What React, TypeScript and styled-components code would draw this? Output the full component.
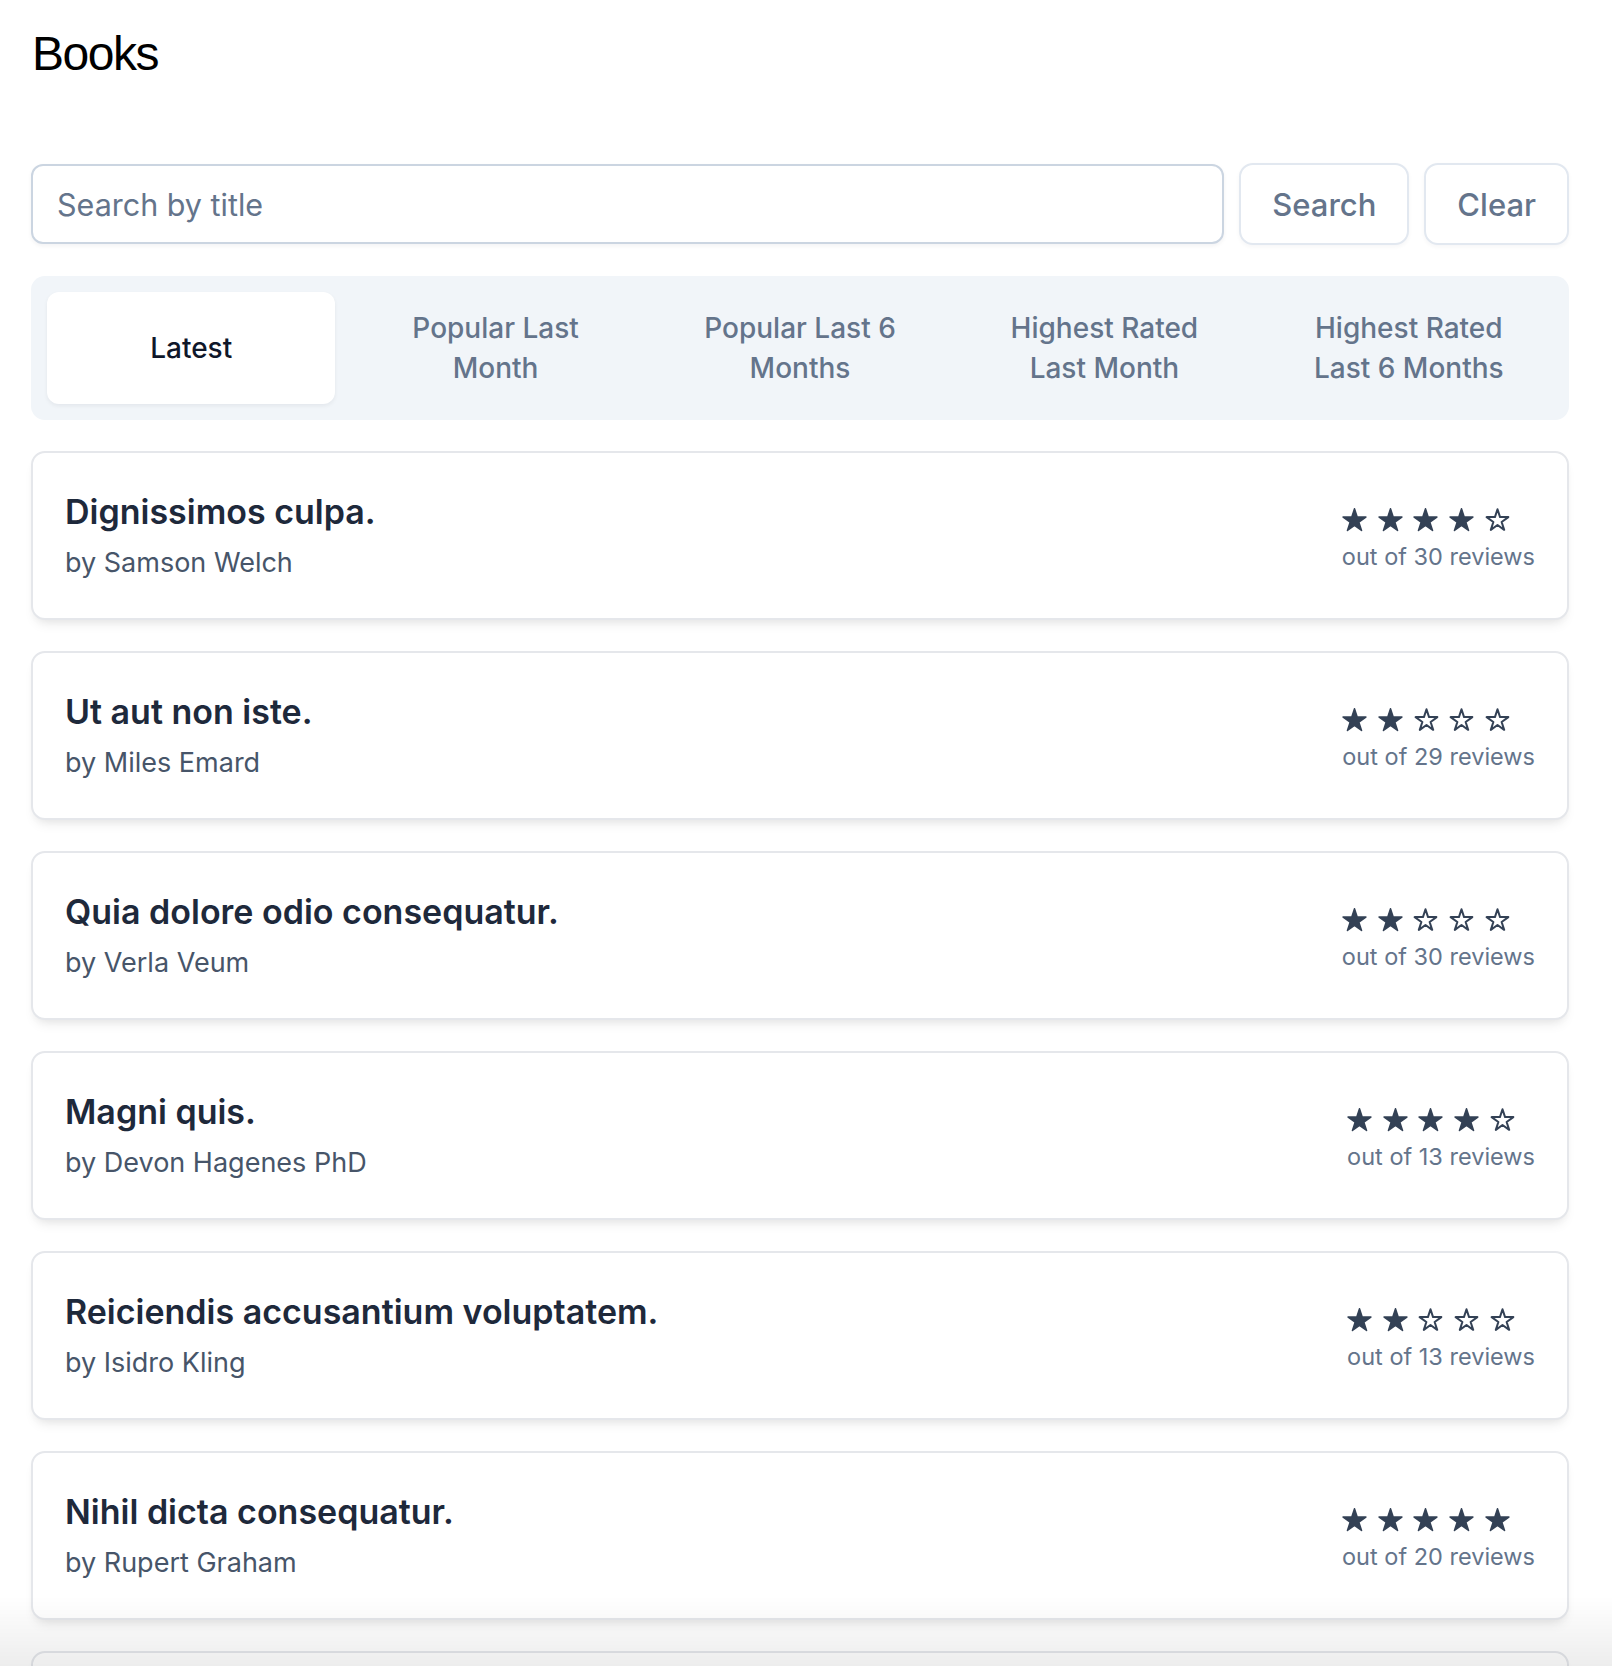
import styled, { createGlobalStyle } from 'styled-components'

type Book = {
  title: string
  author: string
  rating: number
  reviews: number
}

const books: Book[] = [
  { title: 'Dignissimos culpa.', author: 'Samson Welch', rating: 4, reviews: 30 },
  { title: 'Ut aut non iste.', author: 'Miles Emard', rating: 2, reviews: 29 },
  { title: 'Quia dolore odio consequatur.', author: 'Verla Veum', rating: 2, reviews: 30 },
  { title: 'Magni quis.', author: 'Devon Hagenes PhD', rating: 4, reviews: 13 },
  { title: 'Reiciendis accusantium voluptatem.', author: 'Isidro Kling', rating: 2, reviews: 13 },
  { title: 'Nihil dicta consequatur.', author: 'Rupert Graham', rating: 5, reviews: 20 },
  { title: 'Voluptas et rerum.', author: 'Ada Kuhn', rating: 3, reviews: 18 },
]

const tabs = [
  'Latest',
  'Popular Last Month',
  'Popular Last 6 Months',
  'Highest Rated Last Month',
  'Highest Rated Last 6 Months',
]

// star outline as polygon points, R = outer radius
const starPoints = (R: number, cx: number, cy: number) => {
  const r = R * 0.382
  const pts: string[] = []
  for (let i = 0; i < 10; i++) {
    const a = ((-90 + i * 36) * Math.PI) / 180
    const rad = i % 2 === 0 ? R : r
    pts.push(`${(cx + rad * Math.cos(a)).toFixed(2)},${(cy + rad * Math.sin(a)).toFixed(2)}`)
  }
  return pts.join(' ')
}

function Star({ filled }: { filled: boolean }) {
  return (
    <svg width="25" height="24" viewBox="0 0 25 24">
      {filled ? (
        <polygon
          points={starPoints(12, 12.5, 12.75)}
          fill="#334155"
          stroke="#334155"
          strokeWidth="1.5"
          strokeLinejoin="round"
        />
      ) : (
        <polygon
          points={starPoints(11.4, 12.5, 12.6)}
          fill="none"
          stroke="#334155"
          strokeWidth="2"
          strokeLinejoin="round"
        />
      )}
    </svg>
  )
}

export default function App() {
  return (
    <>
      <GlobalStyle />
      <Page>
        <Heading>Books</Heading>
        <SearchRow>
          <SearchInput type="text" placeholder="Search by title" />
          <Button>Search</Button>
          <Button>Clear</Button>
        </SearchRow>
        <TabBar>
          {tabs.map((t, i) => (
            <Tab key={t} $active={i === 0}>
              {t}
            </Tab>
          ))}
        </TabBar>
        <List>
          {books.map((b) => (
            <Card key={b.title}>
              <div>
                <BookTitle>{b.title}</BookTitle>
                <Author>by {b.author}</Author>
              </div>
              <RatingBox>
                <Stars>
                  {[1, 2, 3, 4, 5].map((n) => (
                    <Star key={n} filled={n <= b.rating} />
                  ))}
                </Stars>
                <Reviews>out of {b.reviews} reviews</Reviews>
              </RatingBox>
            </Card>
          ))}
        </List>
      </Page>
      <BottomFade />
    </>
  )
}

const GlobalStyle = createGlobalStyle`
  * {
    box-sizing: border-box;
  }
  body {
    margin: 0;
    background: #ffffff;
    font-family: Inter, "Noto Sans", sans-serif;
    color: #0f172a;
  }
`

const Page = styled.div`
  width: 1538px;
  margin-left: 31px;
  padding-top: 30px;
  padding-bottom: 40px;
`

const Heading = styled.h1`
  margin: 0 0 85px 1px;
  font-family: 'Liberation Sans', Arial, sans-serif;
  font-size: 48px;
  line-height: 48px;
  font-weight: 400;
  letter-spacing: -1.5px;
  color: #000000;
`

const SearchRow = styled.div`
  display: flex;
  align-items: center;
  gap: 15px;
  margin-bottom: 31px;
`

const SearchInput = styled.input`
  flex: 1;
  height: 80px;
  padding: 0 24px;
  border: 2px solid #cbd5e1;
  border-radius: 12px;
  font-family: Inter, sans-serif;
  font-size: 30.5px;
  color: #0f172a;
  background: #ffffff;
  box-shadow: 0 2px 4px rgba(15, 23, 42, 0.05);
  outline: none;

  &::placeholder {
    color: #64748b;
  }
`

const Button = styled.button`
  height: 82px;
  padding: 0 31px;
  border: 2px solid #e2e8f0;
  border-radius: 14px;
  background: #ffffff;
  font-family: Inter, sans-serif;
  font-size: 31px;
  font-weight: 500;
  color: #64748b;
  box-shadow: 0 2px 4px rgba(15, 23, 42, 0.04);
  cursor: pointer;
`

const TabBar = styled.div`
  display: grid;
  grid-template-columns: repeat(5, 1fr);
  gap: 16px;
  padding: 16px;
  margin-bottom: 31px;
  background: #f1f5f9;
  border-radius: 14px;
`

const Tab = styled.div<{ $active?: boolean }>`
  display: flex;
  align-items: center;
  justify-content: center;
  min-height: 112px;
  padding: 16px 24px;
  border-radius: 12px;
  text-align: center;
  font-size: 28px;
  line-height: 40px;
  font-weight: 500;
  color: ${(p) => (p.$active ? '#0f172a' : '#64748b')};
  background: ${(p) => (p.$active ? '#ffffff' : 'transparent')};
  box-shadow: ${(p) => (p.$active ? '0 2px 4px rgba(15, 23, 42, 0.06)' : 'none')};
`

const List = styled.div`
  display: flex;
  flex-direction: column;
  gap: 31px;
`

const Card = styled.div`
  display: flex;
  align-items: center;
  justify-content: space-between;
  padding: 33px 32px 35px;
  border: 2px solid #e5e7eb;
  border-radius: 14px;
  background: #ffffff;
  box-shadow: 0 8px 12px -4px rgba(0, 0, 0, 0.08), 0 4px 8px -4px rgba(0, 0, 0, 0.06);
`

const BookTitle = styled.div`
  font-size: 34px;
  line-height: 52px;
  font-weight: 600;
  color: #1e293b;
`

const Author = styled.div`
  margin-top: 5px;
  font-size: 27px;
  line-height: 40px;
  color: #475569;
`

const RatingBox = styled.div`
  display: flex;
  flex-direction: column;
  margin-top: 7px;
`

const Stars = styled.div`
  display: flex;
  align-items: center;
  gap: 10.7px;
  height: 32px;
`

const Reviews = styled.div`
  margin-top: 5px;
  font-size: 23.5px;
  line-height: 32px;
  color: #64748b;
`

const BottomFade = styled.div`
  position: fixed;
  left: 0;
  right: 0;
  bottom: 0;
  height: 70px;
  pointer-events: none;
  background: linear-gradient(to bottom, rgba(0, 0, 0, 0), rgba(0, 0, 0, 0.07));
`
